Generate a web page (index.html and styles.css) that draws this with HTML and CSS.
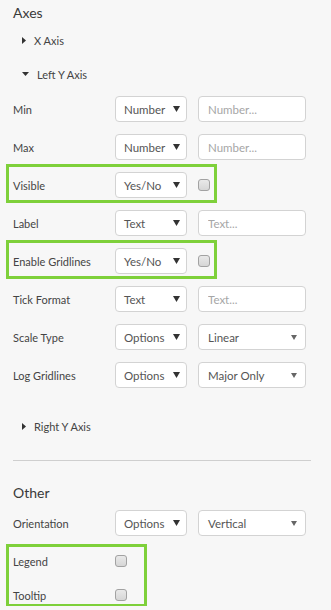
FILE: index.html
```html
<!DOCTYPE html>
<html lang="en">
<head>
  <meta charset="UTF-8">
  <meta name="viewport" content="width=device-width, initial-scale=1.0">
  <title>Chart Options</title>
  <link rel="stylesheet" href="styles.css">
</head>
<body>
  <div class="panel">
    <h2 class="section-title">Axes</h2>

    <div class="tree-item first">
      <svg class="caret" width="4" height="7" viewBox="0 0 4 7"><polygon points="0,0 4,3.5 0,7" fill="#333"/></svg>
      <span>X Axis</span>
    </div>
    <div class="tree-item open">
      <svg class="caret" width="7" height="4" viewBox="0 0 7 4"><polygon points="0,0 7,0 3.5,4" fill="#333"/></svg>
      <span>Left Y Axis</span>
    </div>

    <div class="row first-row">
      <label class="row-label">Min</label>
      <div class="select"><span>Number</span><svg class="arrow" width="7" height="6" viewBox="0 0 7 6"><polygon points="0,0 7,0 3.5,6" fill="#333"/></svg></div>
      <input class="field" type="text" placeholder="Number...">
    </div>
    <div class="row">
      <label class="row-label">Max</label>
      <div class="select"><span>Number</span><svg class="arrow" width="7" height="6" viewBox="0 0 7 6"><polygon points="0,0 7,0 3.5,6" fill="#333"/></svg></div>
      <input class="field" type="text" placeholder="Number...">
    </div>
    <div class="row highlight">
      <label class="row-label">Visible</label>
      <div class="select"><span>Yes/No</span><svg class="arrow" width="7" height="6" viewBox="0 0 7 6"><polygon points="0,0 7,0 3.5,6" fill="#333"/></svg></div>
      <div class="check"></div>
    </div>
    <div class="row">
      <label class="row-label">Label</label>
      <div class="select"><span>Text</span><svg class="arrow" width="7" height="6" viewBox="0 0 7 6"><polygon points="0,0 7,0 3.5,6" fill="#333"/></svg></div>
      <input class="field" type="text" placeholder="Text...">
    </div>
    <div class="row highlight">
      <label class="row-label">Enable Gridlines</label>
      <div class="select"><span>Yes/No</span><svg class="arrow" width="7" height="6" viewBox="0 0 7 6"><polygon points="0,0 7,0 3.5,6" fill="#333"/></svg></div>
      <div class="check"></div>
    </div>
    <div class="row">
      <label class="row-label">Tick Format</label>
      <div class="select"><span>Text</span><svg class="arrow" width="7" height="6" viewBox="0 0 7 6"><polygon points="0,0 7,0 3.5,6" fill="#333"/></svg></div>
      <input class="field" type="text" placeholder="Text...">
    </div>
    <div class="row">
      <label class="row-label">Scale Type</label>
      <div class="select"><span>Options</span><svg class="arrow" width="7" height="6" viewBox="0 0 7 6"><polygon points="0,0 7,0 3.5,6" fill="#333"/></svg></div>
      <div class="select wide"><span>Linear</span><svg class="arrow" width="6" height="5" viewBox="0 0 6 5"><polygon points="0,0 6,0 3,5" fill="#666"/></svg></div>
    </div>
    <div class="row">
      <label class="row-label">Log Gridlines</label>
      <div class="select"><span>Options</span><svg class="arrow" width="7" height="6" viewBox="0 0 7 6"><polygon points="0,0 7,0 3.5,6" fill="#333"/></svg></div>
      <div class="select wide"><span>Major Only</span><svg class="arrow" width="6" height="5" viewBox="0 0 6 5"><polygon points="0,0 6,0 3,5" fill="#666"/></svg></div>
    </div>

    <div class="tree-item closed-end">
      <svg class="caret" width="4" height="7" viewBox="0 0 4 7"><polygon points="0,0 4,3.5 0,7" fill="#333"/></svg>
      <span>Right Y Axis</span>
    </div>

    <hr class="divider">

    <h2 class="section-title other">Other</h2>

    <div class="row orientation">
      <label class="row-label">Orientation</label>
      <div class="select"><span>Options</span><svg class="arrow" width="7" height="6" viewBox="0 0 7 6"><polygon points="0,0 7,0 3.5,6" fill="#333"/></svg></div>
      <div class="select wide"><span>Vertical</span><svg class="arrow" width="6" height="5" viewBox="0 0 6 5"><polygon points="0,0 6,0 3,5" fill="#666"/></svg></div>
    </div>

    <div class="toggle-group">
      <div class="toggle-row">
        <label class="row-label">Legend</label>
        <div class="check"></div>
      </div>
      <div class="toggle-row">
        <label class="row-label">Tooltip</label>
        <div class="check"></div>
      </div>
    </div>
  </div>
</body>
</html>
```

FILE: styles.css
```css
body {
  margin: 0;
  padding: 0;
  background-color: #f7f7f7;
  font-family: Lato, "Liberation Sans", sans-serif;
  font-size: 11px;
  color: #444;
}

.panel {
  display: flex;
  flex-direction: column;
  padding: 3px 20px 0 13px;
}

.section-title {
  margin: 0;
  font-size: 14px;
  font-weight: normal;
  line-height: 20px;
  color: #3a3a3a;
}

.section-title.other {
  margin-top: 22px;
}

/* 树形展开项 */
.tree-item {
  display: flex;
  align-items: center;
  height: 20px;
  padding-left: 9px;
  margin-top: 14px;
}

.tree-item.first {
  margin-top: 7px;
}

.tree-item .caret {
  margin-right: 8px;
}

.tree-item.closed-end {
  margin-top: 28px;
}

.row {
  display: flex;
  align-items: center;
  height: 26px;
  margin-top: 12px;
}

.row.orientation {
  margin-top: 7px;
}

.row-label {
  width: 102px;
  flex-shrink: 0;
}

.select {
  box-sizing: border-box;
  display: flex;
  align-items: center;
  justify-content: space-between;
  width: 72px;
  height: 26px;
  padding: 0 6px 0 8px;
  background-color: #fff;
  border: 1px solid #d3d3d3;
  border-radius: 4px;
  color: #555;
  font-size: 11.5px;
}

.select.wide {
  width: 108px;
  margin-left: 11px;
  padding: 0 8px 0 9px;
}

.field {
  box-sizing: border-box;
  width: 108px;
  height: 26px;
  margin: 0 0 0 11px;
  padding: 0 9px;
  background-color: #fff;
  border: 1px solid #d3d3d3;
  border-radius: 4px;
  font-family: inherit;
  font-size: 11.5px;
  color: #555;
}

.field::placeholder {
  color: #a6a6a6;
}

.check {
  box-sizing: border-box;
  width: 12px;
  height: 12px;
  border: 1px solid #a2a2a2;
  border-radius: 3px;
  background: linear-gradient(#e9e9e9, #d6d6d6);
  flex-shrink: 0;
}

.row .check {
  margin-left: 11px;
}

/* 绿色高亮框 */
.highlight {
  position: relative;
  align-self: flex-start;
}

.highlight::before {
  content: '';
  position: absolute;
  top: -8px;
  bottom: -5px;
  left: -7px;
  right: -7px;
  border: 3px solid #7ed03a;
}

.divider {
  width: 100%;
  margin: 24px 0 0;
  border: none;
  border-top: 1px solid #cfcfcf;
}

.toggle-group {
  position: relative;
  align-self: flex-start;
  margin-top: 14px;
}

.toggle-group::before {
  content: '';
  position: absolute;
  top: -6px;
  bottom: -1px;
  left: -7px;
  right: -20px;
  border: 3px solid #7ed03a;
}

.toggle-row {
  display: flex;
  align-items: center;
  height: 22px;
}

.toggle-row + .toggle-row {
  margin-top: 12px;
}
```
